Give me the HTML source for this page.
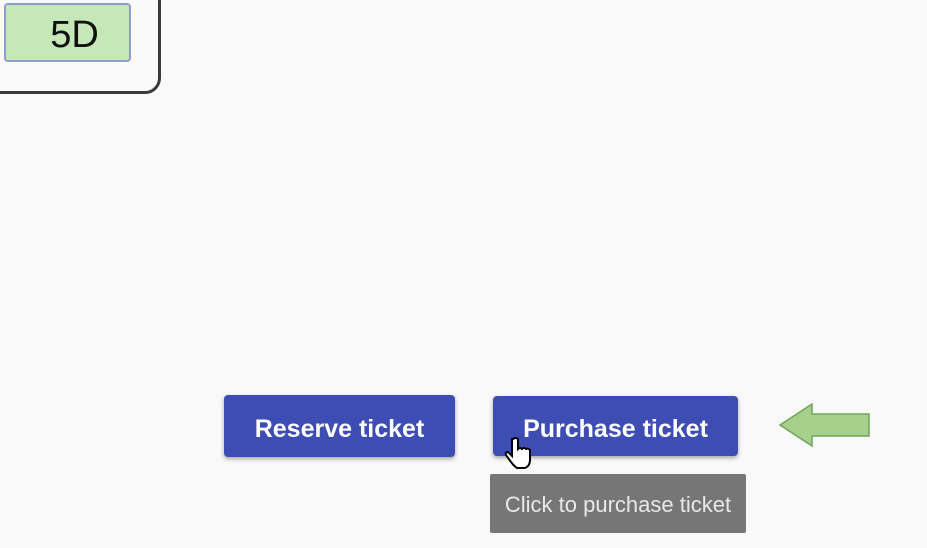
<!DOCTYPE html>
<html><head><style>
html,body{margin:0;width:927px;height:548px;background:#f9f9f9;overflow:hidden;font-family:"Liberation Sans",sans-serif;position:relative}
.card{position:absolute;left:-20px;top:-20px;width:175px;height:108px;border:3px solid #3a3a3a;border-radius:16px;background:#fafafa}
.seat{position:absolute;left:4px;top:3px;width:127px;height:59px;background:#c6e7b8;border:2px solid #8f9ccc;border-radius:4px;box-sizing:border-box;font-size:38px;color:#111;text-align:center;line-height:60px;padding-left:14px}
.btn{position:absolute;background:#3e4db4;color:#fff;font-weight:bold;font-size:25px;text-align:center;border-radius:4px;box-shadow:0 2px 4px rgba(0,0,0,.35)}
.tip{position:absolute;left:490px;top:474px;width:256px;height:59px;background:#767676;color:#e8e8e8;font-size:22px;line-height:62px;text-align:center;border-radius:2px}
</style></head><body>
<div class="card"></div>
<div class="seat">5D</div>
<div class="btn" style="left:224px;top:395px;width:231px;height:62px;line-height:68px">Reserve ticket</div>
<div class="btn" style="left:493px;top:396px;width:245px;height:60px;line-height:66px">Purchase ticket</div>
<div class="tip">Click to purchase ticket</div>
<svg style="position:absolute;left:500px;top:436px" width="40" height="36" viewBox="0 0 40 36">
<path d="M13 3 q3-2 5 0 v10 q2-2 4 0 q2-2 4 0 q2-1 4 1 v10 q0 6-5 8 h-8 q-3-2-6-6 l-5-7 q-1-3 2-3 l4 4 v-17z" fill="#fff" stroke="#000" stroke-width="2"/>
</svg>
<svg style="position:absolute;left:778px;top:402px" width="94" height="46" viewBox="0 0 94 46">
<path d="M2 23 L34 2 V12 H91 V34 H34 V44 Z" fill="#a7d08c" stroke="#6fa55a" stroke-width="1.5"/>
</svg>
</body></html>
